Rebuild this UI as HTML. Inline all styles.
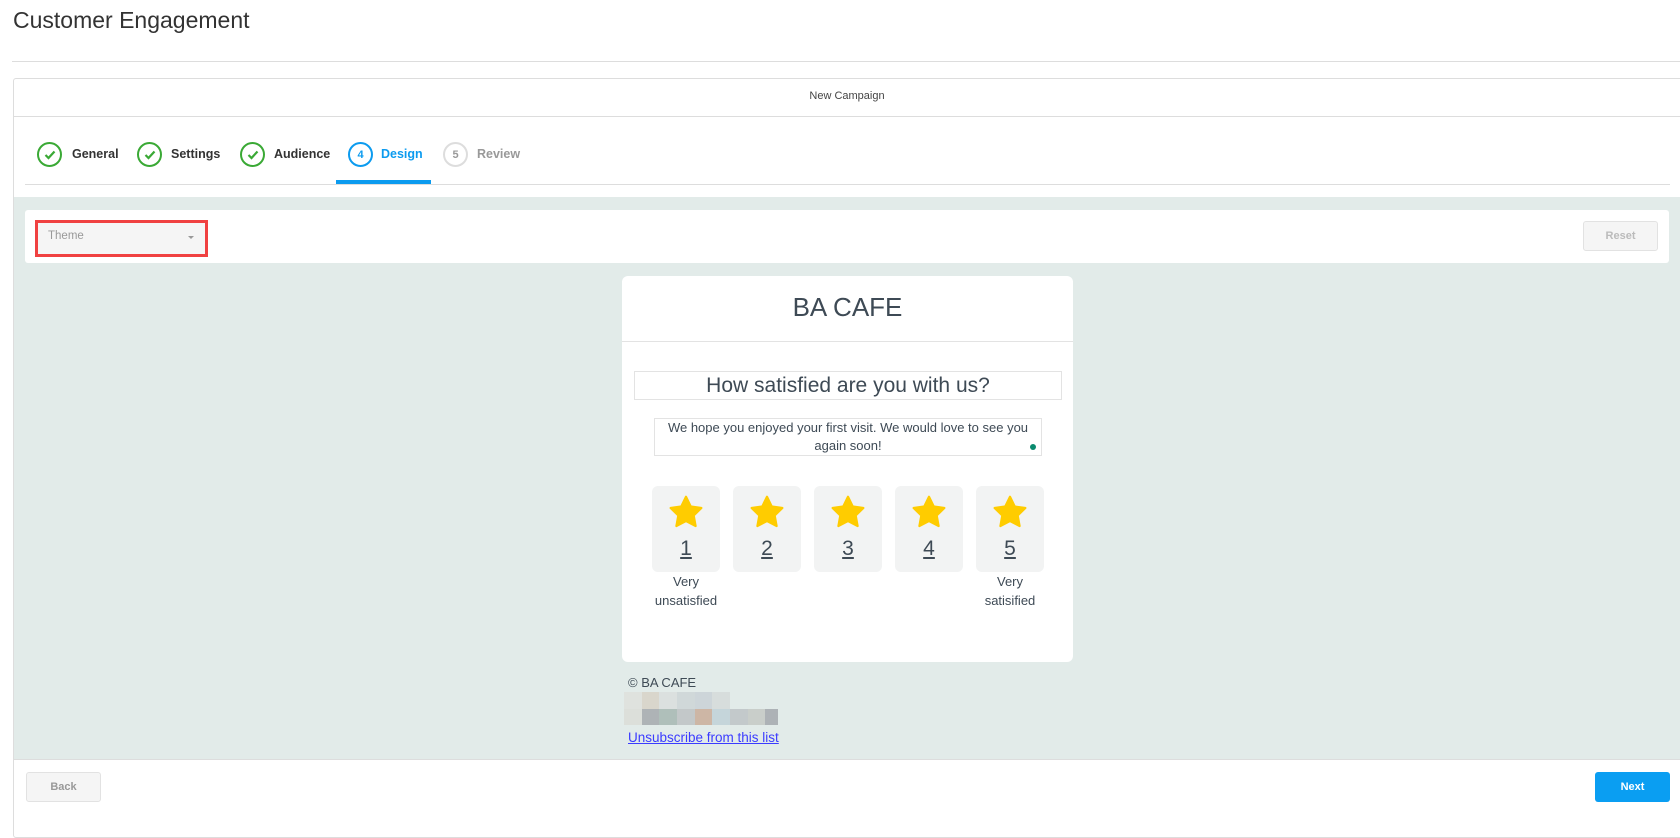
<!DOCTYPE html>
<html><head><meta charset="utf-8"><style>
*{box-sizing:border-box;margin:0;padding:0}
body{width:1680px;height:810px;overflow:hidden;background:#fff;font-family:"Liberation Sans",sans-serif;color:#333;position:relative}
.a{position:absolute}
.circ{position:absolute;width:25px;height:25px;border-radius:50%;top:142px;border:2px solid #3aa935;display:flex;align-items:center;justify-content:center;font-size:11px;font-weight:bold}
.lbl{position:absolute;top:147px;font-size:12.5px;font-weight:bold;color:#333}
.sb{position:absolute;top:486px;width:68px;height:86px;background:#f2f3f3;border-radius:6px;text-align:center}
.sb svg{margin-top:9px}
.sb span{display:block;font-size:21px;text-decoration:underline;color:#3e4a55;margin-top:0px;line-height:30px}
</style></head><body>
<div class="a" style="left:13px;top:7px;font-size:23px;color:#333">Customer Engagement</div>
<div class="a" style="left:12px;top:61px;width:1668px;height:1px;background:#ddd"></div>
<div class="a" style="left:13px;top:78px;width:1680px;height:760px;border:1px solid #ddd;border-radius:3px"></div>
<div class="a" style="left:13px;top:90px;width:1668px;text-align:center;font-size:11px;color:#444">New Campaign</div>
<div class="a" style="left:13px;top:116px;width:1667px;height:1px;background:#ddd"></div>
<div class="a" style="left:25px;top:184px;width:1645px;height:1px;background:#ddd"></div>
<div class="circ" style="left:37px"><svg width="12" height="10" viewBox="0 0 12 10"><path d="M1.5 5l3 3 6-6.5" stroke="#3aa935" stroke-width="2.2" fill="none"/></svg></div>
<div class="lbl" style="left:72px">General</div>
<div class="circ" style="left:137px"><svg width="12" height="10" viewBox="0 0 12 10"><path d="M1.5 5l3 3 6-6.5" stroke="#3aa935" stroke-width="2.2" fill="none"/></svg></div>
<div class="lbl" style="left:171px">Settings</div>
<div class="circ" style="left:240px"><svg width="12" height="10" viewBox="0 0 12 10"><path d="M1.5 5l3 3 6-6.5" stroke="#3aa935" stroke-width="2.2" fill="none"/></svg></div>
<div class="lbl" style="left:274px">Audience</div>
<div class="circ" style="left:348px;border-color:#0c9bef;color:#0c9bef">4</div>
<div class="lbl" style="left:381px;color:#0c9bef">Design</div>
<div class="a" style="left:336px;top:180px;width:95px;height:4px;background:#0c9bef"></div>
<div class="circ" style="left:443px;border-color:#ddd;color:#999">5</div>
<div class="lbl" style="left:477px;color:#999">Review</div>
<div class="a" style="left:14px;top:197px;width:1666px;height:562px;background:#e2ebe9"></div>
<div class="a" style="left:25px;top:210px;width:1644px;height:53px;background:#fff;border-radius:3px"></div>
<div class="a" style="left:35px;top:220px;width:173px;height:37px;border:3px solid #f04141;background:#f5f5f5"></div>
<div class="a" style="left:48px;top:230px;font-size:11.5px;color:#999">Theme</div>
<div class="a" style="left:188px;top:236px;width:0;height:0;border-left:3px solid transparent;border-right:3px solid transparent;border-top:3px solid #999"></div>
<div class="a" style="left:1583px;top:221px;width:75px;height:30px;border:1px solid #e2e2e2;border-radius:3px;background:#f5f5f5;text-align:center;line-height:28px;font-size:11px;font-weight:bold;color:#bbb">Reset</div>
<div class="a" style="left:622px;top:276px;width:451px;height:386px;background:#fff;border-radius:6px"></div>
<div class="a" style="left:622px;top:292px;width:451px;text-align:center;font-size:26px;color:#3e4a55">BA CAFE</div>
<div class="a" style="left:622px;top:341px;width:451px;height:1px;background:#e3e3e3"></div>
<div class="a" style="left:634px;top:371px;width:428px;height:29px;border:1px solid #e3e3e3;text-align:center;font-size:21px;line-height:27px;color:#3e4a55">How satisfied are you with us?</div>
<div class="a" style="left:654px;top:418px;width:388px;height:38px;border:1px solid #e3e3e3;text-align:center;font-size:13px;line-height:18px;color:#3e4a55">We hope you enjoyed your first visit. We would love to see you again soon!</div>
<div class="a" style="left:1030px;top:444px;width:6px;height:6px;border-radius:50%;background:#0a8a6e"></div>
<div class="sb" style="left:652px"><svg width="36" height="34" viewBox="0 0 24 23"><path d="M12 1.2l3.2 6.6 7.2 1-5.2 5 1.3 7.2L12 17.6 5.5 21l1.3-7.2-5.2-5 7.2-1z" fill="#ffcc00" stroke="#ffcc00" stroke-width="1.5" stroke-linejoin="round"/></svg><span>1</span></div>
<div class="sb" style="left:733px"><svg width="36" height="34" viewBox="0 0 24 23"><path d="M12 1.2l3.2 6.6 7.2 1-5.2 5 1.3 7.2L12 17.6 5.5 21l1.3-7.2-5.2-5 7.2-1z" fill="#ffcc00" stroke="#ffcc00" stroke-width="1.5" stroke-linejoin="round"/></svg><span>2</span></div>
<div class="sb" style="left:814px"><svg width="36" height="34" viewBox="0 0 24 23"><path d="M12 1.2l3.2 6.6 7.2 1-5.2 5 1.3 7.2L12 17.6 5.5 21l1.3-7.2-5.2-5 7.2-1z" fill="#ffcc00" stroke="#ffcc00" stroke-width="1.5" stroke-linejoin="round"/></svg><span>3</span></div>
<div class="sb" style="left:895px"><svg width="36" height="34" viewBox="0 0 24 23"><path d="M12 1.2l3.2 6.6 7.2 1-5.2 5 1.3 7.2L12 17.6 5.5 21l1.3-7.2-5.2-5 7.2-1z" fill="#ffcc00" stroke="#ffcc00" stroke-width="1.5" stroke-linejoin="round"/></svg><span>4</span></div>
<div class="sb" style="left:976px"><svg width="36" height="34" viewBox="0 0 24 23"><path d="M12 1.2l3.2 6.6 7.2 1-5.2 5 1.3 7.2L12 17.6 5.5 21l1.3-7.2-5.2-5 7.2-1z" fill="#ffcc00" stroke="#ffcc00" stroke-width="1.5" stroke-linejoin="round"/></svg><span>5</span></div>
<div class="a" style="left:640px;top:572px;width:92px;text-align:center;font-size:13px;line-height:19px;color:#3e4a55">Very<br>unsatisfied</div>
<div class="a" style="left:964px;top:572px;width:92px;text-align:center;font-size:13px;line-height:19px;color:#3e4a55">Very<br>satisified</div>
<div class="a" style="left:628px;top:675px;font-size:13px;color:#3e4a55">© BA CAFE</div>
<div class="a" style="left:624px;top:692px;display:flex">
<i style="width:18px;height:17px;background:#dfe2de"></i><i style="width:17px;height:17px;background:#d9d6cc"></i><i style="width:18px;height:17px;background:#dbe0df"></i><i style="width:18px;height:17px;background:#d0d8d9"></i><i style="width:17px;height:17px;background:#cdd5d9"></i><i style="width:18px;height:17px;background:#d7dddc"></i></div>
<div class="a" style="left:624px;top:709px;display:flex">
<i style="width:18px;height:16px;background:#dcdfda"></i><i style="width:17px;height:16px;background:#aeb3b6"></i><i style="width:18px;height:16px;background:#afbfba"></i><i style="width:18px;height:16px;background:#c3c8c9"></i><i style="width:17px;height:16px;background:#cdb6a5"></i><i style="width:18px;height:16px;background:#c5d5da"></i><i style="width:18px;height:16px;background:#c3c9cb"></i><i style="width:17px;height:16px;background:#c9ceca"></i><i style="width:13px;height:16px;background:#adb2b6"></i></div>
<div class="a" style="left:628px;top:730px;font-size:13.5px;color:#3b3bff;text-decoration:underline">Unsubscribe from this list</div>
<div class="a" style="left:14px;top:759px;width:1666px;height:1px;background:#ddd"></div>
<div class="a" style="left:26px;top:772px;width:75px;height:30px;border:1px solid #e2e2e2;border-radius:3px;background:#f5f5f5;text-align:center;line-height:28px;font-size:11px;font-weight:bold;color:#999">Back</div>
<div class="a" style="left:1595px;top:772px;width:75px;height:30px;border-radius:3px;background:#0a9ef2;text-align:center;line-height:30px;font-size:11px;font-weight:bold;color:#fff">Next</div>
</body></html>
